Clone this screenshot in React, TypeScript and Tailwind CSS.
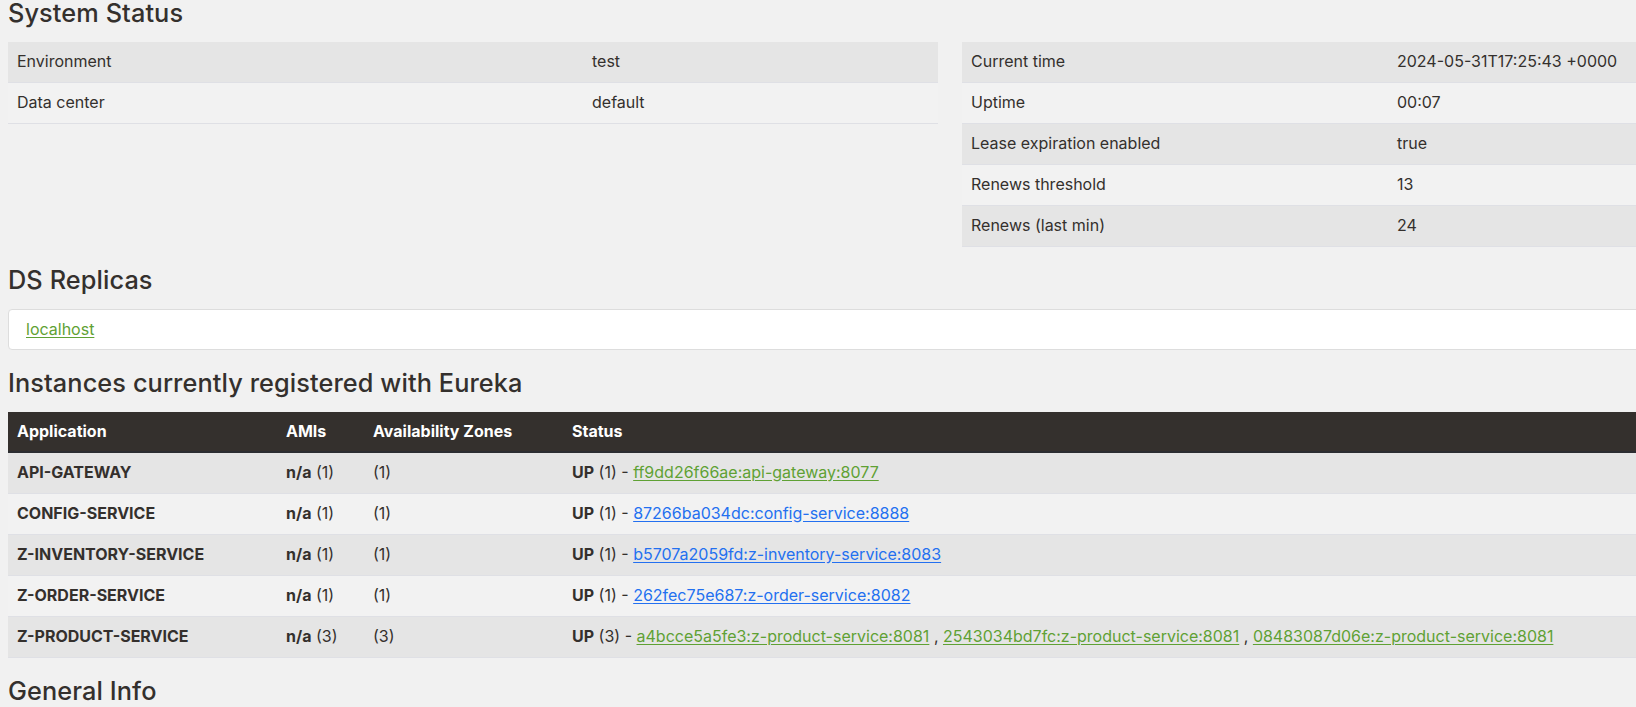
import React from 'react';

const FONT = { fontFamily: 'Inter, "Noto Sans", sans-serif' };

type KV = [string, string];

const leftStatus: KV[] = [
  ['Environment', 'test'],
  ['Data center', 'default'],
];

const rightStatus: KV[] = [
  ['Current time', '2024-05-31T17:25:43 +0000'],
  ['Uptime', '00:07'],
  ['Lease expiration enabled', 'true'],
  ['Renews threshold', '13'],
  ['Renews (last min)', '24'],
];

interface Instance {
  app: string;
  count: number;
  green: boolean;
  links: string[];
}

const instances: Instance[] = [
  { app: 'API-GATEWAY', count: 1, green: true, links: ['ff9dd26f66ae:api-gateway:8077'] },
  { app: 'CONFIG-SERVICE', count: 1, green: false, links: ['87266ba034dc:config-service:8888'] },
  { app: 'Z-INVENTORY-SERVICE', count: 1, green: false, links: ['b5707a2059fd:z-inventory-service:8083'] },
  { app: 'Z-ORDER-SERVICE', count: 1, green: false, links: ['262fec75e687:z-order-service:8082'] },
  {
    app: 'Z-PRODUCT-SERVICE',
    count: 3,
    green: true,
    links: [
      'a4bcce5a5fe3:z-product-service:8081',
      '2543034bd7fc:z-product-service:8081',
      '08483087d06e:z-product-service:8081',
    ],
  },
];

function Heading({ children, first }: { children: React.ReactNode; first?: boolean }) {
  return (
    <h2
      className={`text-[25.3px] leading-[26px] font-medium tracking-[0.1px] text-[#34302d] ${first ? 'pt-0 pb-[16px]' : 'pt-[20px] pb-[16px]'}`}
    >
      {children}
    </h2>
  );
}

function StatusTable({ rows, labelWidth }: { rows: KV[]; labelWidth: string }) {
  return (
    <div>
      {rows.map(([k, v], i) => (
        <div
          key={k}
          className={`flex h-[41px] items-center border-b border-[#dfe0e5] pb-[3px] ${i % 2 === 0 ? 'bg-[#e5e5e5]' : 'bg-[#f2f2f2]'}`}
        >
          <div className={`${labelWidth} shrink-0 pl-[9px]`}>{k}</div>
          <div className="pl-[9px]">{v}</div>
        </div>
      ))}
    </div>
  );
}

export default function App() {
  return (
    <div className="w-full min-h-screen overflow-hidden bg-[#f1f1f1] text-[#34302d]" style={FONT}>
      <div className="w-[1900px] px-[8px] text-[16px]">
        <Heading first>System Status</Heading>
        <div className="grid grid-cols-2 items-start gap-[24px]">
          <StatusTable rows={leftStatus} labelWidth="w-[575px]" />
          <StatusTable rows={rightStatus} labelWidth="w-[426px]" />
        </div>

        <Heading>DS Replicas</Heading>
        <div className="flex h-[41px] items-center rounded-[4px] border border-[#dddddd] bg-white pb-[2px] pl-[17px]">
          <a className="text-[#5fa134] underline underline-offset-2">localhost</a>
        </div>

        <Heading>Instances currently registered with Eureka</Heading>
        <div>
          <div className="flex h-[41px] items-center border-b-2 border-[#2b2d31] bg-[#34302d] pb-[2px] font-bold text-white">
            <div className="w-[269px] shrink-0 pl-[9px]">Application</div>
            <div className="w-[87px] shrink-0 pl-[9px]">AMIs</div>
            <div className="w-[199px] shrink-0 pl-[9px]">Availability Zones</div>
            <div className="pl-[9px]">Status</div>
          </div>
          {instances.map((r, i) => (
            <div
              key={r.app}
              className={`flex h-[41px] items-center border-b border-[#dfe0e5] pb-[3px] ${i % 2 === 0 ? 'bg-[#e5e5e5]' : 'bg-[#f2f2f2]'}`}
            >
              <div className="w-[269px] shrink-0 pl-[9px] font-bold">{r.app}</div>
              <div className="w-[87px] shrink-0 pl-[9px]">
                <b>n/a</b> ({r.count})
              </div>
              <div className="w-[199px] shrink-0 pl-[9px]">({r.count})</div>
              <div className="pl-[9px]">
                <b>UP</b> ({r.count}) -{' '}
                {r.links.map((l, j) => (
                  <React.Fragment key={l}>
                    {j > 0 && ' , '}
                    <a
                      className={`underline underline-offset-2 ${r.green ? 'text-[#5fa134]' : 'text-[#2370f0]'}`}
                    >
                      {l}
                    </a>
                  </React.Fragment>
                ))}
              </div>
            </div>
          ))}
        </div>

        <Heading>General Info</Heading>
      </div>
    </div>
  );
}
